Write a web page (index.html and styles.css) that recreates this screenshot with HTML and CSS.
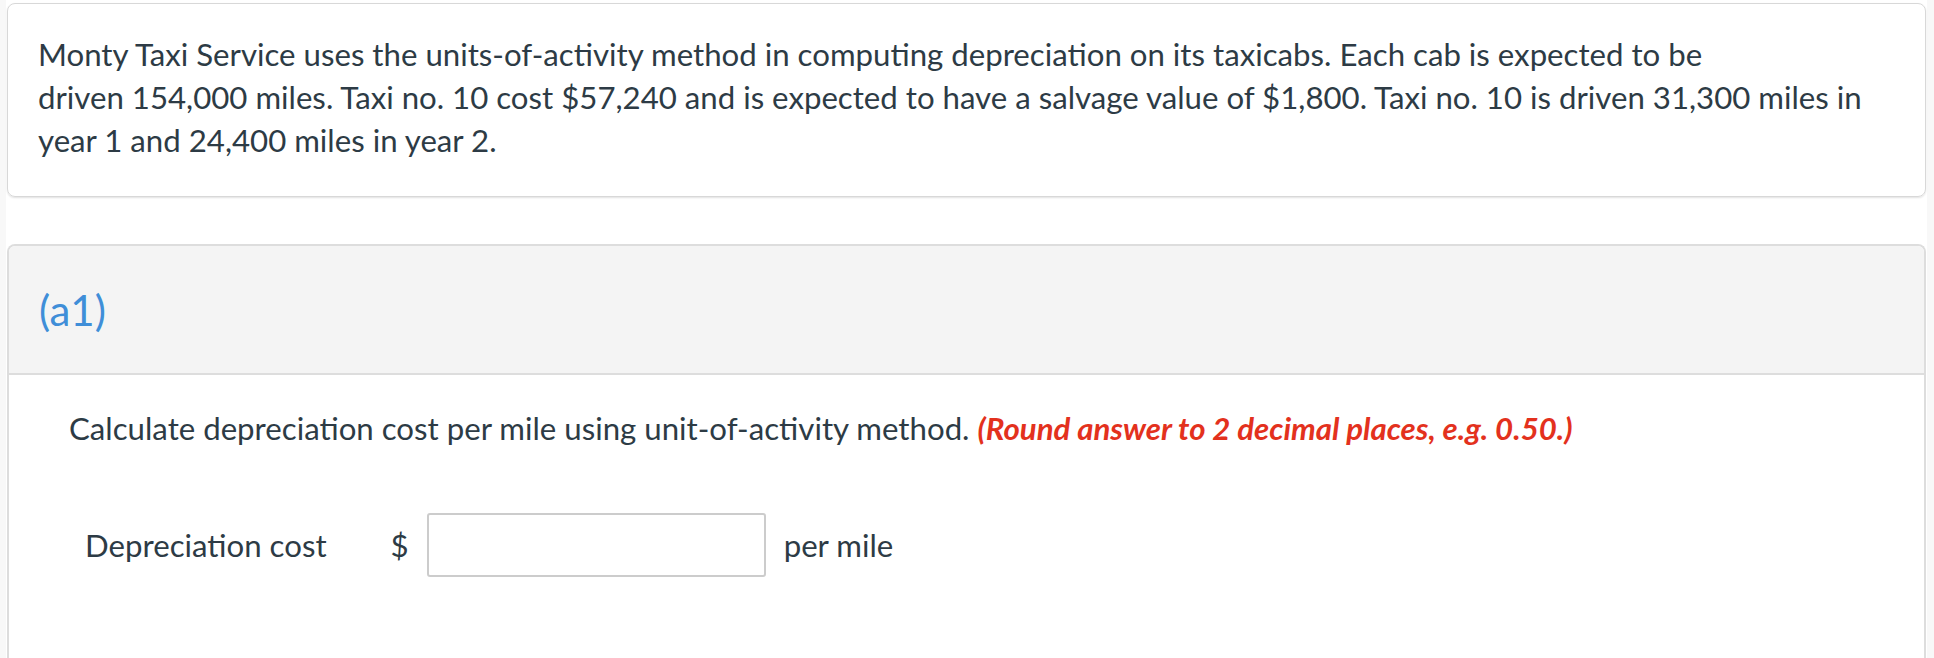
FILE: index.html
```html
<!DOCTYPE html>
<html lang="en">
<head>
<meta charset="utf-8">
<title>Monty Taxi Service</title>
<link rel="stylesheet" href="styles.css">
</head>
<body>
<main class="page">
  <section class="intro-card">
    <p class="intro-text">Monty Taxi Service uses the units-of-activity method in computing depreciation on its taxicabs. Each cab is expected to be<br>driven 154,000 miles. Taxi no. 10 cost $57,240 and is expected to have a salvage value of $1,800. Taxi no. 10 is driven 31,300 miles in<br>year 1 and 24,400 miles in year 2.</p>
  </section>
  <section class="part-card">
    <header class="part-header">
      <h2 class="part-title">(a1)</h2>
    </header>
    <div class="part-body">
      <p class="question">Calculate depreciation cost per mile using unit-of-activity method. <em class="hint">(Round answer to 2 decimal places, e.g. 0.50.)</em></p>
      <div class="answer-row">
        <span class="answer-label">Depreciation cost</span>
        <span class="currency">$</span>
        <input class="answer-input" type="text" aria-label="Depreciation cost">
        <span class="unit">per mile</span>
      </div>
    </div>
  </section>
</main>
</body>
</html>
```
FILE: styles.css
```css
html, body {
  margin: 0;
  padding: 0;
}
body {
  background: #f8f8f8;
  font-family: "Lato", "Open Sans", sans-serif;
  color: #2d3b45;
  overflow: hidden;
}
.page {
  margin-left: 6px;
  width: 1921px;
  min-height: 100vh;
  background: #ffffff;
  padding: 3px 1px 0;
  box-sizing: border-box;
}
.intro-card {
  border: 1px solid #d8d8d8;
  border-radius: 8px;
  box-shadow: 0 1px 2px rgba(0, 0, 0, 0.12);
  padding: 29px 30px 34px;
}
.intro-text {
  margin: 0;
  font-size: 31.2px;
  line-height: 43px;
}
.part-card {
  margin-top: 47px;
  border: 2px solid #dddddd;
  border-bottom: none;
  border-radius: 8px 8px 0 0;
  min-height: 460px;
}
.part-header {
  background: #f4f4f4;
  border-bottom: 2px solid #dddddd;
  border-radius: 6px 6px 0 0;
  padding: 39px 30px 38px;
}
.part-title {
  margin: 0;
  font-weight: 400;
  font-size: 42px;
  line-height: 50px;
  color: #3f8ed8;
}
.part-body {
  padding: 32px 60px 0;
}
.question {
  margin: 0;
  font-size: 31.2px;
  line-height: 43px;
}
.hint {
  font-weight: 700;
  font-style: italic;
  color: #e3311d;
}
.answer-row {
  display: flex;
  align-items: center;
  margin: 63px 0 0 16px;
  font-size: 31.2px;
}
.answer-label {
  margin-right: 64px;
}
.currency {
  margin-right: 18px;
}
.answer-input {
  width: 339px;
  height: 64px;
  box-sizing: border-box;
  border: 2px solid #cccccc;
  border-radius: 3px;
  background: #ffffff;
  margin: 0 18px 0 0;
  font: inherit;
}
```
